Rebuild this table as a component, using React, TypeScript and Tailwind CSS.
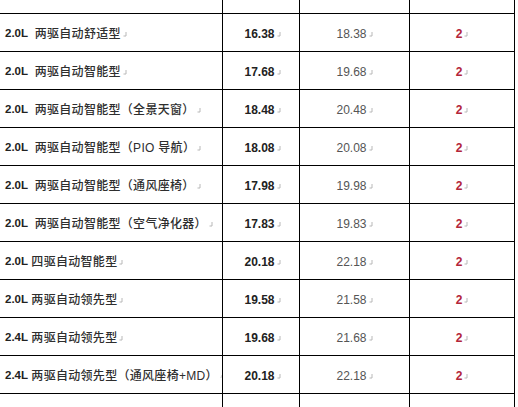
import React from 'react';

type Row = { engine: string; name: string; wide?: boolean; price: string; guide: string; disc: string };

const rows: Row[] = [
  { engine: '', name: '', price: '', guide: '', disc: '' },
  { engine: '2.0L', name: '两驱自动舒适型', wide: true, price: '16.38', guide: '18.38', disc: '2' },
  { engine: '2.0L', name: '两驱自动智能型', wide: true, price: '17.68', guide: '19.68', disc: '2' },
  { engine: '2.0L', name: '两驱自动智能型（全景天窗）', wide: true, price: '18.48', guide: '20.48', disc: '2' },
  { engine: '2.0L', name: '两驱自动智能型（PIO 导航）', wide: true, price: '18.08', guide: '20.08', disc: '2' },
  { engine: '2.0L', name: '两驱自动智能型（通风座椅）', wide: true, price: '17.98', guide: '19.98', disc: '2' },
  { engine: '2.0L', name: '两驱自动智能型（空气净化器）', wide: true, price: '17.83', guide: '19.83', disc: '2' },
  { engine: '2.0L', name: '四驱自动智能型', price: '20.18', guide: '22.18', disc: '2' },
  { engine: '2.0L', name: '两驱自动领先型', price: '19.58', guide: '21.58', disc: '2' },
  { engine: '2.4L', name: '两驱自动领先型', price: '19.68', guide: '21.68', disc: '2' },
  { engine: '2.4L', name: '两驱自动领先型（通风座椅+MD）', price: '20.18', guide: '22.18', disc: '2' },
  { engine: '2.4L', name: '四驱自动领先型', price: '20.98', guide: '22.98', disc: '2' },
];

// 段落标记（Word 里的回车符）
const Mark = () => (
  <svg width="4" height="5" viewBox="0 0 4 5" className="inline-block ml-[2px] align-baseline">
    <path d="M3 0 V4 H0.5" fill="none" stroke="#b0b0b0" strokeWidth="0.9" />
  </svg>
);

const font = { fontFamily: '"Liberation Sans", "Noto Sans CJK SC", sans-serif' };

export default function App() {
  return (
    <div className="w-[518px] h-[407px] overflow-hidden bg-white" style={font}>
      <div className="w-[515px] -mt-[25px]">
        {rows.map((r, i) => (
          <div
            key={i}
            className="grid grid-cols-[223px_77px_110px_105px] h-[38px] border-t border-black text-[12px] leading-none"
          >
            <div className="flex items-center pl-[5px] pt-[3px] border-r border-black text-[#2e2e2e] whitespace-pre">
              {r.engine && (
                <>
                  <span className="font-bold text-[#222] text-[11.5px]">{r.engine}</span>
                  <span>{r.wide ? '  ' : ' '}</span>
                  <span className="tracking-[0.3px] font-medium">{r.name}</span>
                  <Mark />
                </>
              )}
            </div>
            <div className="flex items-center justify-center pl-[3px] pt-[3px] border-r border-black font-bold text-[#222] text-[12px]">
              {r.price && (
                <>
                  {r.price}
                  <Mark />
                </>
              )}
            </div>
            <div className="flex items-center justify-center pt-[3px] border-r border-black text-[#555] text-[12px]">
              {r.guide && (
                <>
                  {r.guide}
                  <Mark />
                </>
              )}
            </div>
            <div className="flex items-center justify-center pt-[3px] border-r border-black font-bold text-[#b3263a] text-[12px]">
              {r.disc && (
                <>
                  {r.disc}
                  <Mark />
                </>
              )}
            </div>
          </div>
        ))}
      </div>
    </div>
  );
}
